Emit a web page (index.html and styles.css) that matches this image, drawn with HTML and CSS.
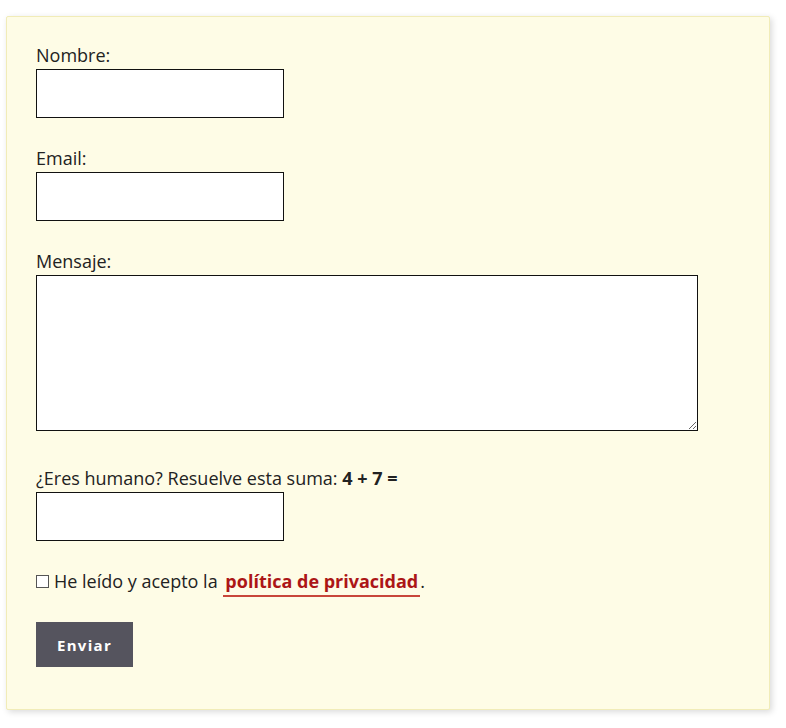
FILE: index.html
```html
<!DOCTYPE html>
<html lang="es">
<head>
  <meta charset="UTF-8">
  <meta name="viewport" content="width=device-width, initial-scale=1.0">
  <title>Contacto</title>
  <link rel="stylesheet" href="styles.css">
</head>
<body>
  <!-- Formulario de contacto -->
  <form class="contact-box">
    <div class="field">
      <label for="nombre">Nombre:</label>
      <input type="text" id="nombre" class="short">
    </div>

    <div class="field">
      <label for="email">Email:</label>
      <input type="email" id="email" class="short">
    </div>

    <div class="field">
      <label for="mensaje">Mensaje:</label>
      <textarea id="mensaje"></textarea>
    </div>

    <div class="field">
      <label for="suma">¿Eres humano? Resuelve esta suma: <b>4 + 7 =</b></label>
      <input type="text" id="suma" class="short">
    </div>

    <div class="field check">
      <input type="checkbox" id="acepto">
      <label for="acepto">He leído y acepto la <a href="#" class="policy">política de privacidad</a>.</label>
    </div>

    <button type="button">Enviar</button>
  </form>
</body>
</html>
```

FILE: styles.css
```css
body {
  margin: 0;
  padding: 16px 16px 18px 6px;
  background-color: #fff;
  font-family: "Open Sans", Arial, sans-serif;
  font-size: 18px;
  line-height: 27px;
  color: #222;
}
.contact-box {
  width: 764px;
  box-sizing: border-box;
  padding: 25px 29px 42px;
  background-color: #fefce6;
  border: 1px solid #f1ecb8;
  border-radius: 2px;
  box-shadow: 2px 2px 6px rgba(0, 0, 0, 0.15);
}
.field {
  display: flex;
  flex-direction: column;
  align-items: flex-start;
  margin-bottom: 27px;
}
label {
  display: block;
}
input.short {
  width: 248px;
  height: 49px;
  box-sizing: border-box;
  margin: 0;
  border: 1px solid #111;
  background-color: #fff;
}
textarea {
  width: 662px;
  height: 156px;
  box-sizing: border-box;
  margin: 0 0 7px;
  border: 1px solid #111;
  background-color: #fff;
  resize: both;
}
.check {
  flex-direction: row;
  align-items: center;
}
.check input {
  width: 13px;
  height: 13px;
  margin: 0 5px 0 0;
  appearance: none;
  border: 1px solid #555;
  background-color: #fff;
}
.policy {
  color: #ac1616;
  font-weight: bold;
  text-decoration: none;
  padding: 0 2px 2px;
  margin-left: 1px;
  border-bottom: 2px solid #c8463a;
}
button {
  width: 97px;
  height: 45px;
  padding: 0;
  background-color: #55545e;
  color: #fff;
  border: none;
  font-family: "Open Sans", Arial, sans-serif;
  font-size: 15px;
  font-weight: bold;
  letter-spacing: 1.3px;
  cursor: pointer;
}
```
